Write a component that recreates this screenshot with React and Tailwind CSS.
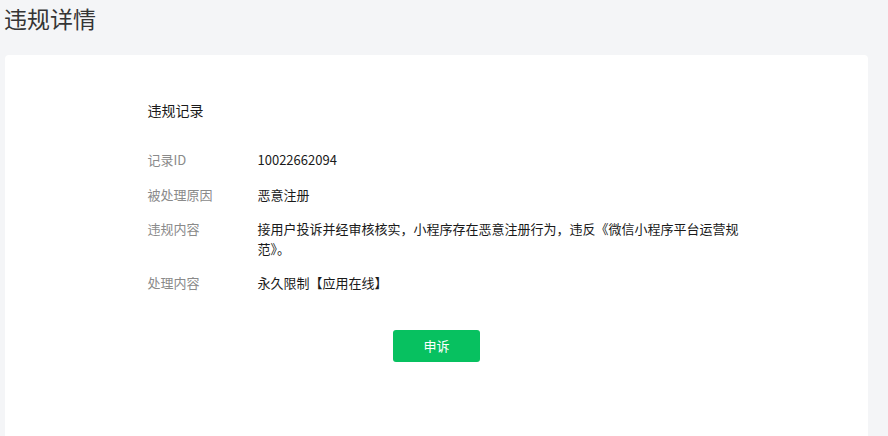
import React from 'react';

const rows = [
    { label: '记录ID', value: '10022662094' },
    { label: '被处理原因', value: '恶意注册' },
    { label: '违规内容', value: '接用户投诉并经审核核实，小程序存在恶意注册行为，违反《微信小程序平台运营规范》。' },
    { label: '处理内容', value: '永久限制【应用在线】' },
];

const App = () => {
    return (
        <div
            className="min-h-screen bg-[#f4f5f7] overflow-hidden"
            style={{ fontFamily: '"Noto Sans CJK SC", "Noto Sans", sans-serif' }}
        >
            <h1 className="pl-[4px] pt-[1px] h-[55px] text-[23px] leading-[34px] font-normal text-[#353535]">
                违规详情
            </h1>

            <div className="ml-[5px] w-[863px] h-[400px] bg-white rounded-[4px] pt-[45px]">
                <div className="w-[578px] mx-auto">
                    <h2 className="text-[14px] leading-[20px] font-normal text-[#1a1a1a] mb-[30px]">违规记录</h2>

                    <div className="flex flex-col gap-[15px]">
                        {rows.map((row) => (
                            <div key={row.label} className="flex text-[13px] leading-[19.5px]">
                                <div className="w-[110px] shrink-0 text-[#8a8a8a]">{row.label}</div>
                                <div className="w-[487px] shrink-0 text-[#1a1a1a]">{row.value}</div>
                            </div>
                        ))}
                    </div>
                </div>

                <div className="flex justify-center mt-[37px]">
                    <button className="w-[87px] h-[32px] rounded-[3px] bg-[#07c160] text-white text-[13px] leading-[32px]">
                        申诉
                    </button>
                </div>
            </div>
        </div>
    );
};

export default App;
